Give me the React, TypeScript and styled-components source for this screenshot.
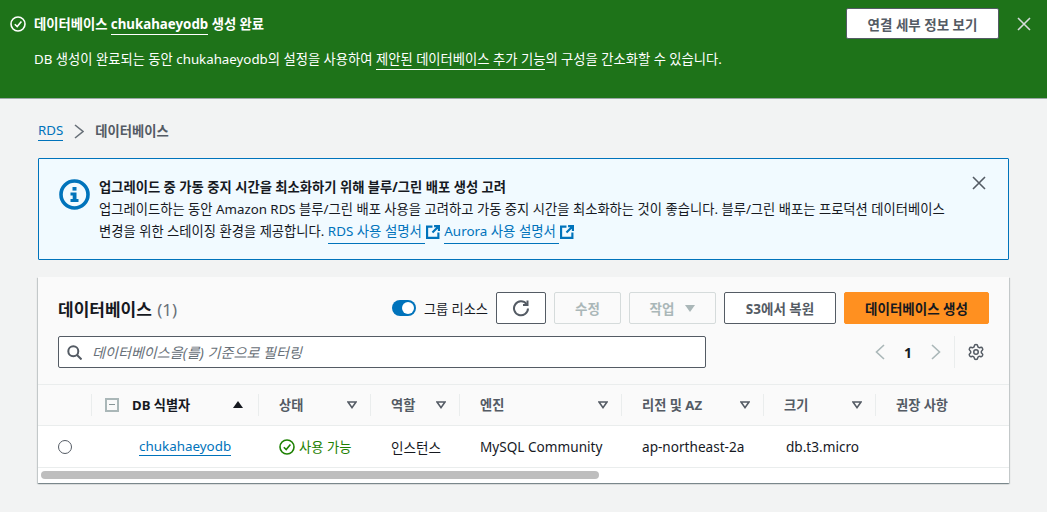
import React from "react";
import styled, { createGlobalStyle } from "styled-components";
import { Settings } from "lucide-react";

const GlobalStyle = createGlobalStyle`
  html, body {
    margin: 0;
    padding: 0;
    background: #f2f3f3;
    font-family: "Noto Sans", "Noto Sans CJK KR", sans-serif;
    font-size: 13.3px;
    color: #16191f;
  }
  * { box-sizing: border-box; }
`;

const Page = styled.div`
  width: 1047px;
  height: 512px;
  overflow: hidden;
`;

const Flash = styled.div`
  height: 99px;
  background: #1e7319;
  border-bottom: 1px solid #9ba7a6;
  color: #fff;
  padding: 8px 16px 0 10px;
  display: flex;
  justify-content: space-between;
  align-items: flex-start;
`;

const FlashBody = styled.div`
  display: flex;
  flex-direction: column;
`;

const FlashTitle = styled.div`
  display: flex;
  align-items: center;
  gap: 8px;
  height: 31px;
  font-size: 13.3px;
  font-weight: 700;
`;

const FlashText = styled.div`
  margin: 10px 0 0 24px;
  font-size: 13.3px;
  line-height: 20px;
`;

const FlashLink = styled.span`
  border-bottom: 1px solid #fff;
  padding-bottom: 1px;
`;

const FlashActions = styled.div`
  display: flex;
  align-items: center;
  gap: 18px;
`;

const FlashButton = styled.div`
  width: 153px;
  height: 31px;
  background: #fff;
  border: 1px solid #545b64;
  border-radius: 2px;
  color: #545b64;
  font-weight: 700;
  font-size: 13.5px;
  display: flex;
  align-items: center;
  justify-content: center;
`;

const Content = styled.div`
  padding: 0 38px;
`;

const Crumbs = styled.div`
  height: 59px;
  padding-top: 22px;
  display: flex;
  align-items: flex-start;
  gap: 11px;
  font-size: 13.3px;
  line-height: 20px;
`;

const CrumbLink = styled.span`
  color: #0073bb;
  border-bottom: 1px solid #0073bb;
  line-height: 17px;
  height: 20px;
  padding-top: 1px;
`;

const CrumbCurrent = styled.span`
  color: #545b64;
  font-weight: 600;
`;

const InfoBox = styled.div`
  height: 102px;
  background: #f1faff;
  border: 1px solid #0073bb;
  border-radius: 1px;
  padding: 17px 22px 0 20px;
  display: flex;
  gap: 9px;
  margin-bottom: 17px;
`;

const InfoBody = styled.div`
  flex: 1;
  line-height: 22px;
  font-size: 13.3px;
`;

const InfoTitle = styled.div`
  font-weight: 700;
  font-size: 13.3px;
`;

const InfoLink = styled.span`
  color: #0073bb;
  border-bottom: 1px solid #0073bb;
  padding: 0 3px 1px 0;
  font-size: 13.4px;
`;

const LinkGroup = styled.span`
  display: inline-flex;
  align-items: center;
  margin-right: 1px;
  vertical-align: baseline;
`;

const Card = styled.div`
  height: 206px;
  background: #fff;
  box-shadow: 0 1px 1px 0 rgba(0, 28, 36, 0.3), 1px 1px 1px 0 rgba(0, 28, 36, 0.15), -1px 1px 1px 0 rgba(0, 28, 36, 0.15);
  display: flex;
  flex-direction: column;
`;

const CardHead = styled.div`
  height: 108px;
  background: #fafafa;
  border-bottom: 1px solid #eaeded;
  padding: 15px 20px 0;
`;

const HeadRow = styled.div`
  height: 32px;
  display: flex;
  align-items: center;
`;

const Title = styled.div`
  flex: 1;
  font-size: 17px;
  font-weight: 700;
`;

const Count = styled.span`
  color: #687078;
  font-weight: 400;
  margin-left: 1px;
`;

const Toggle = styled.div`
  width: 24px;
  height: 16px;
  border-radius: 8px;
  background: #0073bb;
  padding: 2px 2px 2px 10px;
  margin-right: 8px;
`;

const Knob = styled.div`
  width: 12px;
  height: 12px;
  border-radius: 50%;
  background: #fff;
`;

const ToggleLabel = styled.span`
  font-size: 13.2px;
  margin-right: 8px;
`;

const Button = styled.div<{ $w: number; $kind?: "disabled" | "primary"; $gap?: number }>`
  width: ${(p) => p.$w}px;
  height: 32px;
  margin-left: ${(p) => p.$gap ?? 8}px;
  border-radius: 2px;
  border: 1px solid ${(p) => (p.$kind === "disabled" ? "#d5dbdb" : p.$kind === "primary" ? "#ff9020" : "#545b64")};
  background: ${(p) => (p.$kind === "primary" ? "#ff9020" : p.$kind === "disabled" ? "#fafafa" : "#fff")};
  color: ${(p) => (p.$kind === "disabled" ? "#aab7b8" : p.$kind === "primary" ? "#16191f" : "#545b64")};
  font-size: 13.5px;
  font-weight: 700;
  display: flex;
  align-items: center;
  justify-content: center;
  gap: 11px;
`;

const Caret = styled.span`
  width: 0;
  height: 0;
  border-left: 5px solid transparent;
  border-right: 5px solid transparent;
  border-top: 7px solid #aab7b8;
`;

const FilterRow = styled.div`
  height: 32px;
  margin-top: 12px;
  display: flex;
  align-items: center;
`;

const Search = styled.div`
  width: 648px;
  height: 32px;
  border: 1px solid #545b64;
  border-radius: 2px;
  background: #fff;
  display: flex;
  align-items: center;
  gap: 10px;
  padding-left: 8px;
  font-style: italic;
  font-size: 14.1px;
  color: #687078;
`;

const Pager = styled.div`
  margin-left: auto;
  display: flex;
  align-items: center;
  font-weight: 700;
  font-size: 14px;
  gap: 19px;
  padding-right: 13px;
  height: 32px;
  border-right: 1px solid #eaeded;
`;

const Gear = styled.div`
  margin-left: 12px;
  margin-right: 4px;
  display: flex;
`;

const Grid = styled.div`
  display: grid;
  grid-template-columns: 53px 167px 112px 89px 162px 142px 112px 1fr;
`;

const HeadCells = styled(Grid)`
  height: 41px;
  background: #fafafa;
  border-bottom: 1px solid #eaeded;
  align-items: center;
`;

const HeadCell = styled.div<{ $first?: boolean }>`
  height: 22px;
  margin-top: -1px;
  padding: 0 13px 0 20px;
  border-left: ${(p) => (p.$first ? "none" : "1px solid #eaeded")};
  display: flex;
  align-items: center;
  justify-content: space-between;
  font-size: 13.2px;
  font-weight: 700;
  color: #545b64;
`;

const IdCell = styled(HeadCell)`
  padding-left: 13px;
  color: #16191f;
  justify-content: flex-start;
`;

const Minus = styled.span`
  width: 14px;
  height: 14px;
  border: 2px solid #aab7b8;
  margin-right: 13px;
  display: flex;
  align-items: center;
  justify-content: center;
  &::after {
    content: "";
    width: 6px;
    height: 1px;
    background: #879596;
  }
`;

const SortUp = styled.span`
  margin-left: auto;
  margin-right: 2px;
  width: 0;
  height: 0;
  border-left: 5px solid transparent;
  border-right: 5px solid transparent;
  border-bottom: 7px solid #16191f;
`;

const Row = styled(Grid)`
  height: 42px;
  border-bottom: 1px solid #eaeded;
  align-items: center;
  font-size: 13.6px;
`;

const Cell = styled.div<{ $pad?: number }>`
  padding-left: ${(p) => p.$pad ?? 21}px;
  white-space: nowrap;
  display: flex;
  align-items: center;
`;

const Radio = styled.span`
  width: 14px;
  height: 14px;
  border-radius: 50%;
  border: 1px solid #545b64;
  background: #fff;
`;

const NameLink = styled.span`
  color: #0073bb;
  border-bottom: 1px solid #0073bb;
  line-height: 18px;
  font-size: 13.4px;
`;

const Status = styled.span`
  display: inline-flex;
  align-items: center;
  gap: 4px;
  color: #1d8102;
  font-size: 13.3px;
`;

const ScrollTrack = styled.div`
  flex: 1;
  padding: 3px 3px 0 3px;
  background: #fff;
`;

const ScrollThumb = styled.div`
  width: 558px;
  height: 8px;
  border-radius: 4px;
  background: #bebebe;
`;

const CheckCircle = ({ color, size }: { color: string; size: number }) => (
  <svg width={size} height={size} viewBox="0 0 16 16" fill="none" stroke={color} strokeWidth="1.6">
    <circle cx="8" cy="8" r="7" />
    <path d="M4.8 8.2 7.2 10.6 11.4 5.6" />
  </svg>
);

const Cross = ({ color }: { color: string }) => (
  <svg width="14" height="14" viewBox="0 0 14 14" stroke={color} strokeWidth="1.6" fill="none">
    <path d="M1 1 13 13M13 1 1 13" />
  </svg>
);

const External = () => (
  <svg width="14" height="14" viewBox="0 0 13 13" fill="none" stroke="#0073bb" strokeWidth="2" style={{ marginLeft: 1 }}>
    <path d="M6 1.5H1v10.5h10.5V7M7.5 1h4.5v4.5M12 1 6 7" />
  </svg>
);

const FilterCaret = () => (
  <svg width="10" height="8" viewBox="0 0 10 8" fill="none" stroke="#545b64" strokeWidth="1.6">
    <path d="M1 1h8L5 6.6z" />
  </svg>
);

const columns = [
  { label: "상태" },
  { label: "역할" },
  { label: "엔진" },
  { label: "리전 및 AZ" },
  { label: "크기" },
];

export default function App() {
  return (
    <Page>
      <GlobalStyle />
      <Flash>
        <FlashBody>
          <FlashTitle>
            <CheckCircle color="#fff" size={16} />
            <span>
              데이터베이스 <FlashLink>chukahaeyodb</FlashLink> 생성 완료
            </span>
          </FlashTitle>
          <FlashText>
            DB 생성이 완료되는 동안 chukahaeyodb의 설정을 사용하여 <FlashLink>제안된 데이터베이스 추가 기능</FlashLink>의 구성을 간소화할 수 있습니다.
          </FlashText>
        </FlashBody>
        <FlashActions>
          <FlashButton>연결 세부 정보 보기</FlashButton>
          <Cross color="#d5dbdb" />
        </FlashActions>
      </Flash>
      <Content>
        <Crumbs>
          <CrumbLink>RDS</CrumbLink>
          <svg width="10" height="20" viewBox="0 0 10 20" fill="none" stroke="#687078" strokeWidth="1.6">
            <path d="M1 4l8 6.5L1 17" />
          </svg>
          <CrumbCurrent>데이터베이스</CrumbCurrent>
        </Crumbs>
        <InfoBox>
          <svg width="31" height="31" viewBox="0 0 31 31" style={{ flexShrink: 0, marginTop: 3 }}>
            <circle cx="15.5" cy="15.5" r="13.5" fill="none" stroke="#0073bb" strokeWidth="3.6" />
            <rect x="13.5" y="8" width="4" height="3.6" fill="#0073bb" />
            <path d="M11.5 13.5h6v6.5h2v3h-8v-3h2.2v-3.6h-2.2z" fill="#0073bb" />
          </svg>
          <InfoBody>
            <InfoTitle>업그레이드 중 가동 중지 시간을 최소화하기 위해 블루/그린 배포 생성 고려</InfoTitle>
            <div>
              업그레이드하는 동안 Amazon RDS 블루/그린 배포 사용을 고려하고 가동 중지 시간을 최소화하는 것이 좋습니다. 블루/그린 배포는 프로덕션 데이터베이스
              <br />
              변경을 위한 스테이징 환경을 제공합니다.{" "}
              <LinkGroup>
                <InfoLink>RDS 사용 설명서</InfoLink>
                <External />
              </LinkGroup>{" "}
              <LinkGroup>
                <InfoLink>Aurora 사용 설명서</InfoLink>
                <External />
              </LinkGroup>
            </div>
          </InfoBody>
          <Cross color="#545b64" />
        </InfoBox>
        <Card>
          <CardHead>
            <HeadRow>
              <Title>
                데이터베이스 <Count>(1)</Count>
              </Title>
              <Toggle>
                <Knob />
              </Toggle>
              <ToggleLabel>그룹 리소스</ToggleLabel>
              <Button $w={50} $gap={0}>
                <svg width="18" height="18" viewBox="0 0 18 18" fill="none" stroke="#545b64" strokeWidth="2">
                  <path d="M14.5 5A7 7 0 1 0 16 9.5" />
                  <path d="M15.5 1.5V6H11" />
                </svg>
              </Button>
              <Button $w={67} $kind="disabled">수정</Button>
              <Button $w={87} $kind="disabled">
                작업 <Caret />
              </Button>
              <Button $w={112} $gap={8}>S3에서 복원</Button>
              <Button $w={145} $kind="primary">데이터베이스 생성</Button>
            </HeadRow>
            <FilterRow>
              <Search>
                <svg width="15" height="15" viewBox="0 0 15 15" fill="none" stroke="#545b64" strokeWidth="2">
                  <circle cx="6.3" cy="6.3" r="5" />
                  <path d="M10 10l4.5 4.5" />
                </svg>
                데이터베이스을(를) 기준으로 필터링
              </Search>
              <Pager>
                <svg width="10" height="16" viewBox="0 0 10 16" fill="none" stroke="#aab7b8" strokeWidth="1.6">
                  <path d="M9 1 1.5 8 9 15" />
                </svg>
                <span>1</span>
                <svg width="10" height="16" viewBox="0 0 10 16" fill="none" stroke="#aab7b8" strokeWidth="1.6">
                  <path d="M1 1l7.5 7L1 15" />
                </svg>
              </Pager>
              <Gear>
                <Settings size={18} color="#545b64" strokeWidth={2} />
              </Gear>
            </FilterRow>
          </CardHead>
          <HeadCells>
            <div />
            <IdCell>
              <Minus />
              DB 식별자
              <SortUp />
            </IdCell>
            {columns.map((c) => (
              <HeadCell key={c.label}>
                {c.label}
                <FilterCaret />
              </HeadCell>
            ))}
            <HeadCell>권장 사항</HeadCell>
          </HeadCells>
          <Row>
            <Cell $pad={20}>
              <Radio />
            </Cell>
            <Cell $pad={48}>
              <NameLink>chukahaeyodb</NameLink>
            </Cell>
            <Cell $pad={21}>
              <Status>
                <CheckCircle color="#1d8102" size={16} />
                사용 가능
              </Status>
            </Cell>
            <Cell>인스턴스</Cell>
            <Cell>MySQL Community</Cell>
            <Cell>ap-northeast-2a</Cell>
            <Cell $pad={23}>db.t3.micro</Cell>
            <Cell />
          </Row>
          <ScrollTrack>
            <ScrollThumb />
          </ScrollTrack>
        </Card>
      </Content>
    </Page>
  );
}
